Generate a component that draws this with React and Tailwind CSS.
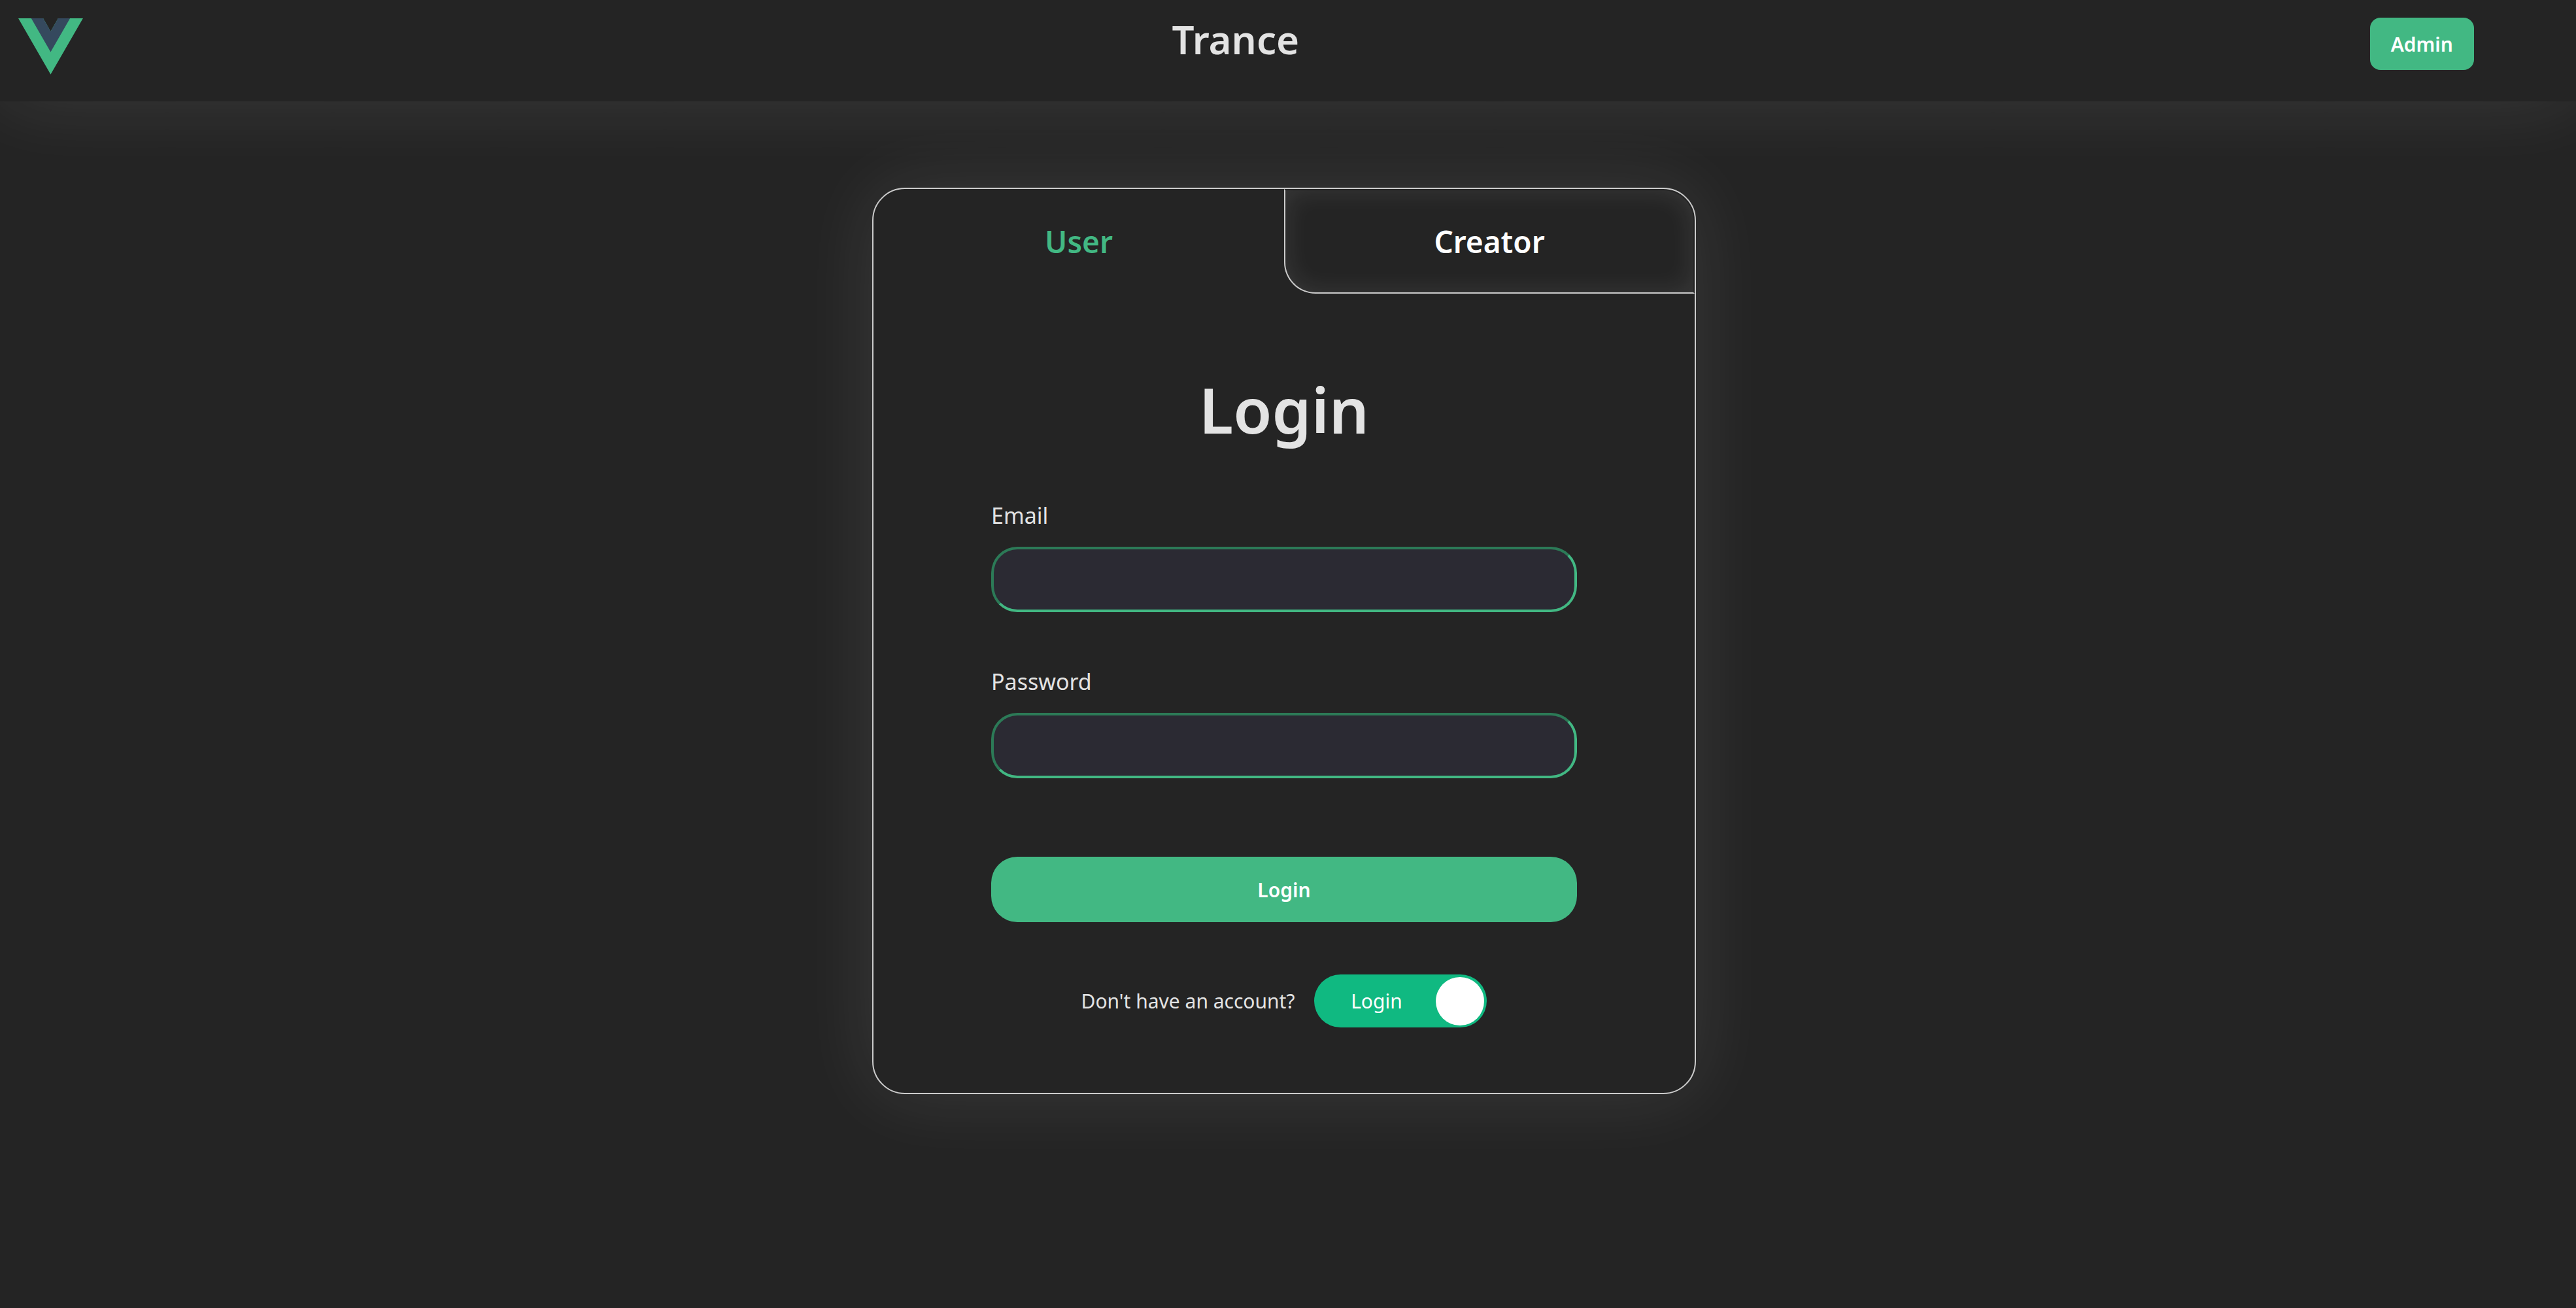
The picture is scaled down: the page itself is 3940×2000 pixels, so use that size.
import { useState } from "react";

function VueLogo() {
  return (
    <svg viewBox="0 0 262 227" className="h-[86px] w-[99px]" role="img" aria-label="Vue logo">
      <path fill="#42b883" d="M161.1 0 130.9 52.4 100.7 0H0l130.9 226.7L261.8 0z" />
      <path fill="#35495e" d="M161.1 0 130.9 52.4 100.7 0H52.3l78.6 136L209.4 0z" />
    </svg>
  );
}

function Header() {
  return (
    <header className="relative z-10 flex h-[155px] items-start justify-between bg-[#242424] pr-[156px] shadow-[0_0_120px_rgba(255,255,255,0.1)]">
      <a href="#home" className="block px-7 pt-7">
        <VueLogo />
      </a>
      <p className="pt-5 text-[60px] leading-[80px] font-semibold">Trance</p>
      <button
        type="button"
        className="mt-[27px] h-20 rounded-2xl bg-[#42b883] px-8 text-[30px] font-semibold text-white"
      >
        Admin
      </button>
    </header>
  );
}

function Tab({ label, active, side, onSelect }) {
  const shape =
    side === "left"
      ? "rounded-tl-[48px] rounded-br-[48px] border-t-transparent border-l-transparent"
      : "rounded-tr-[48px] rounded-bl-[48px] border-t-transparent border-r-transparent";
  const look = active
    ? "text-[#42b883]"
    : `border-2 border-[#ccc] text-white shadow-[inset_0_0_40px_rgba(255,255,255,0.1)] ${shape}`;
  return (
    <button
      type="button"
      role="tab"
      aria-selected={active}
      onClick={onSelect}
      className={`h-40 w-1/2 text-[46px] font-semibold ${look}`}
    >
      {label}
    </button>
  );
}

function Field({ id, label, type }) {
  return (
    <div className="mt-[83px] flex flex-col gap-6">
      <label htmlFor={id} className="text-[34px] leading-[47px]">
        {label}
      </label>
      <input
        id={id}
        type={type}
        className="h-[100px] w-full rounded-[40px] border-4 border-t-[#2c7a57] border-r-[#42b883] border-b-[#42b883] border-l-[#2c7a57] bg-[#2b2a33] px-8 text-[34px] outline-none"
      />
    </div>
  );
}

export default function App() {
  const [tab, setTab] = useState("User");
  const [login, setLogin] = useState(true);
  const mode = login ? "Login" : "Sign up";

  return (
    <div className="min-h-screen bg-[#242424] font-['Noto_Sans',sans-serif] text-[#e3e3e3]">
      <Header />
      <main className="flex justify-center pt-[132px] pr-3 pb-20">
        <section className="w-full max-w-[1260px] rounded-[50px] border-2 border-[#ccc] bg-[#242424] shadow-[0_0_120px_rgba(255,255,255,0.1)]">
          <div role="tablist" className="flex">
            <Tab label="User" side="left" active={tab === "User"} onSelect={() => setTab("User")} />
            <Tab label="Creator" side="right" active={tab === "Creator"} onSelect={() => setTab("Creator")} />
          </div>
          <form className="px-[180px] pt-[120px] pb-[100px]" onSubmit={(e) => e.preventDefault()}>
            <h1 className="text-center text-[96px] leading-[113px] font-semibold">{mode}</h1>
            <Field id="email" label="Email" type="email" />
            <Field id="password" label="Password" type="password" />
            <button
              type="submit"
              className="mt-[120px] h-[100px] w-full rounded-[40px] bg-[#42b883] text-[30px] font-semibold text-white"
            >
              {mode}
            </button>
            <div className="mt-20 flex items-center justify-center gap-[30px] text-[30px]">
              <span id="mode-label" className="whitespace-nowrap">Don't have an account?</span>
              <button
                type="button"
                role="switch"
                aria-checked={login}
                aria-labelledby="mode-label"
                onClick={() => setLogin(!login)}
                className={`flex h-[81px] w-[264px] items-center rounded-full bg-[#10b981] p-1 text-white ${login ? "" : "flex-row-reverse"}`}
              >
                <span className="flex-1 text-center">{mode}</span>
                <span className="size-[74px] rounded-full bg-white" />
              </button>
            </div>
          </form>
        </section>
      </main>
    </div>
  );
}
